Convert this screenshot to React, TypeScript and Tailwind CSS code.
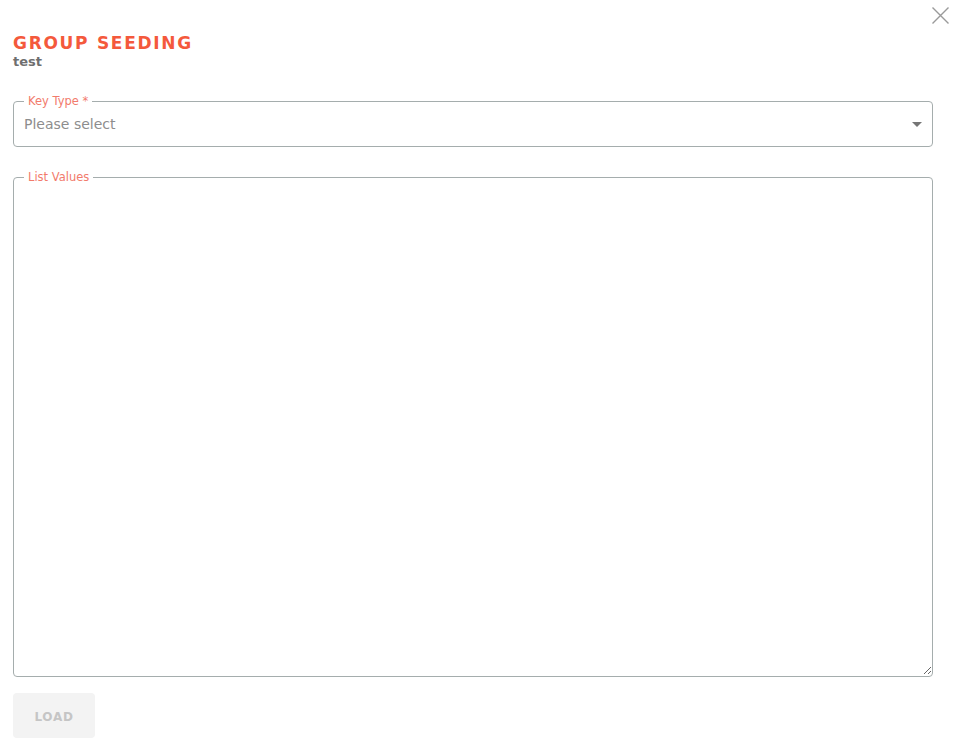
import React from "react";

const font = { fontFamily: '"DejaVu Sans", "Liberation Sans", sans-serif' };

export default function App() {
  return (
    <div className="relative w-[965px] h-[741px] bg-white overflow-hidden" style={font}>
      {/* close button */}
      <button className="absolute right-[15px] top-[6px] w-[19px] h-[19px] text-[#9a9a9a]" aria-label="close">
        <svg viewBox="0 0 19 19" width="19" height="19" fill="none" stroke="currentColor" strokeWidth="1.4">
          <path d="M1.5 1.5 L17.5 17.5 M17.5 1.5 L1.5 17.5" />
        </svg>
      </button>

      <div className="flex flex-col pl-[13px] pr-[32px] pt-[33px]">
        <h1 className="text-[17px] leading-[20px] font-bold tracking-[0.1em] text-[#f4593c]">
          GROUP SEEDING
        </h1>
        <div className="text-[13px] leading-[16px] font-bold text-[#6f6f6f] mt-[1px]">test</div>

        {/* key type select */}
        <fieldset className="mt-[24px] h-[53px] border border-[#a5adad] rounded-[4px] p-0 m-0 min-w-0">
          <legend className="ml-[10px] px-[4px] text-[11.5px] leading-[14px] text-[#f27b6c]">Key Type *</legend>
          <div className="flex items-center h-[45px] pl-[10px] pr-[10px] -mt-[6px]">
            <span className="flex-1 text-[14px] text-[#8d8d8d]">Please select</span>
            <svg width="10" height="5" viewBox="0 0 10 5" className="text-[#757575]">
              <path d="M0 0 L10 0 L5 5 Z" fill="currentColor" />
            </svg>
          </div>
        </fieldset>

        {/* list values */}
        <fieldset className="mt-[23px] h-[507px] border border-[#a5adad] rounded-[4px] p-0 m-0 min-w-0">
          <legend className="ml-[10px] px-[4px] text-[11.5px] leading-[14px] text-[#f27b6c]">List Values</legend>
          <textarea className="block w-full h-[498px] -mt-[7px] resize-y outline-none bg-transparent px-[10px] py-[8px] text-[14px] rounded-[4px]" />
        </fieldset>

        <div className="mt-[16px]">
          <button
            disabled
            className="w-[82px] h-[45px] rounded-[4px] bg-[#f3f3f3] pt-[2px] text-[12px] font-bold tracking-[0.06em] text-[#c5c5c5]"
          >
            LOAD
          </button>
        </div>
      </div>
    </div>
  );
}
